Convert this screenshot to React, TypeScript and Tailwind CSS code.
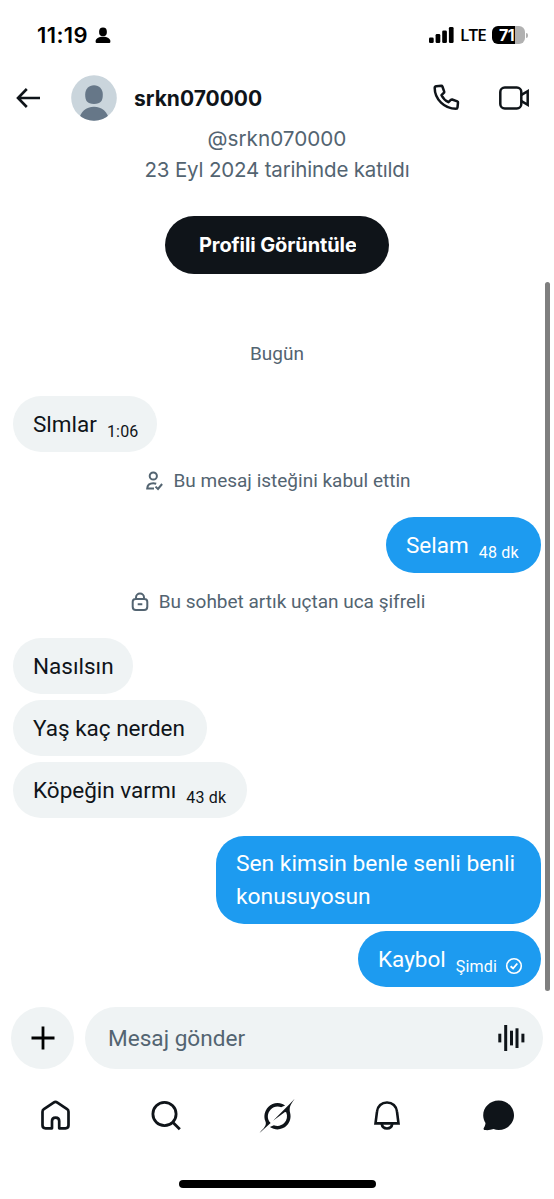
import type { ReactNode } from "react";

const INK = "#0f1419";

function StatusBar() {
  return (
    <div className="flex h-[72px] shrink-0 items-start justify-between pl-[37px] pr-[26px] pt-[23px] text-black">
      <div className="flex h-6 items-center">
        <span className="w-[51px] whitespace-nowrap font-[Inter,sans-serif] text-[22px] font-semibold leading-6 tracking-[0.4px]">11:19</span>
        <svg className="ml-[7px]" width="16" height="17" viewBox="0 0 16 17" fill="currentColor">
          <ellipse cx="8" cy="4.9" rx="3.9" ry="4.3" />
          <path d="M.6 14.4C.6 11.6 3.7 9.8 8 9.8s7.400 1.800 7.400 4.600c0 1-.6 1.600-1.700 1.600H2.300C1.200 16 .6 15.400.6 14.400z" />
        </svg>
      </div>
      <div className="flex h-6 items-center">
        <svg width="25" height="18" viewBox="0 0 25 18" fill="currentColor">
          <rect x="0" y="11.500" width="4.700" height="5.500" rx="1.300" />
          <rect x="6.600" y="8" width="4.700" height="9" rx="1.300" />
          <rect x="13.200" y="4.500" width="4.700" height="12.500" rx="1.300" />
          <rect x="19.900" y="1" width="4.700" height="16" rx="1.300" />
        </svg>
        <span className="ml-[6px] w-[27px] whitespace-nowrap font-['Open_Sans',sans-serif] text-[17px] font-semibold leading-6 tracking-[-0.8px]">LTE</span>
        <div className="ml-[5px] flex h-[18px] w-[33px] items-center overflow-hidden rounded-[6px] bg-[linear-gradient(to_right,#000_70%,#b1b1b1_70%)] pl-[7px]">
          <span className="whitespace-nowrap font-[Inter,sans-serif] text-[16px] font-bold leading-[18px] tracking-[-0.5px] text-white">71</span>
        </div>
        <div className="ml-[1px] h-[5px] w-[2px] rounded-r-full bg-[#b1b1b1]" />
      </div>
    </div>
  );
}

function Header() {
  return (
    <header className="flex h-[52px] shrink-0 items-center pl-[16px] pr-[23px] text-[#0f1419]">
      <svg width="25" height="20" viewBox="0 0 25 20" fill="none" stroke={INK} strokeWidth="2.600">
        <path d="M24 10H2.500M10.800 1L2 10l8.800 9" />
      </svg>
      <svg className="ml-[30px]" width="46" height="46" viewBox="0 0 46 46">
        <defs>
          <clipPath id="avatar"><circle cx="23" cy="23" r="22.800" /></clipPath>
        </defs>
        <g clipPath="url(#avatar)">
          <rect width="46" height="46" fill="#cad5dc" />
          <path d="M23 10.300c5.200 0 8.800 3.900 8.800 9.200 0 6-1.800 9.500-8.800 9.500s-8.800-3.500-8.800-9.500c0-5.300 3.600-9.200 8.800-9.200z" fill="#667788" />
          <path d="M7.500 46C9.500 36.500 15 31.800 23 31.800S36.500 36.500 38.500 46z" fill="#667788" />
        </g>
      </svg>
      <h1 className="ml-[17px] flex-1 whitespace-nowrap pt-[2px] font-[Inter,sans-serif] text-[21px] font-bold leading-7">srkn070000</h1>
      <svg width="28" height="28" viewBox="0 0 28 28" fill="none" stroke={INK} strokeWidth="2.500" strokeLinejoin="round">
        <path d="M3.300 2.200l5-.400c.6 0 .9.200 1.100.700l1.800 5.200c.1.400 0 .7-.2 1L8.500 11.200c1.500 3 4 5.500 7 7l2.600-2.500c.3-.2.600-.3 1-.2l5.200 1.900c.5.200.8.600.700 1.100l-.5 4.800c-.1.900-.7 1.500-1.600 1.500C11.600 24.800 1.700 15.300 1.700 4c0-1 .6-1.700 1.600-1.800z" />
      </svg>
      <svg className="ml-[38px]" width="32" height="26" viewBox="0 0 32 26" fill="none" stroke={INK} strokeWidth="2.500">
        <rect x="1.300" y="2.500" width="21" height="21" rx="4.500" />
        <path d="M22.500 9.800l6.200-3.600v13.600l-6.200-3.600" />
      </svg>
    </header>
  );
}

function Notice({ icon, children }: { icon: ReactNode; children: ReactNode }) {
  return (
    <div className="flex h-6 items-center justify-center gap-[10px] pl-[2px] text-[19px] leading-6 text-[#536471]">
      {icon}
      <span className="whitespace-nowrap">{children}</span>
    </div>
  );
}

function Bubble({ text, time, mine, width, sent }: { text: string; time?: string; mine?: boolean; width: string; sent?: boolean }) {
  const tone = mine ? "self-end bg-[#1d9bf0] text-white" : "self-start bg-[#eff3f4] text-[#0f1419]";
  return (
    <div className={`flex h-[56px] shrink-0 items-center rounded-[28px] pl-5 ${tone} ${width}`}>
      <span className="whitespace-nowrap text-[22.500px] leading-8">{text}</span>
      {time && <span className="ml-[10px] whitespace-nowrap pt-[16px] text-[16px] leading-5 tracking-[0.200px]">{time}</span>}
      {sent && (
        <svg className="ml-[8px] mt-[14px]" width="18" height="18" viewBox="0 0 18 18" fill="none" stroke="currentColor" strokeWidth="1.600">
          <circle cx="9" cy="9" r="7.300" />
          <path d="M5.600 9.200l2.500 2.300 4.200-5" strokeWidth="1.900" />
        </svg>
      )}
    </div>
  );
}

function Composer() {
  return (
    <div className="flex h-[62px] shrink-0 gap-[11px] pl-[11px] pr-[11px]">
      <button className="flex w-[63px] items-center justify-center rounded-full bg-[#eff3f4]">
        <svg width="24" height="24" viewBox="0 0 24 24" stroke="#000" strokeWidth="2.800">
          <path d="M12 .500v23M.500 12h23" />
        </svg>
      </button>
      <div className="flex flex-1 items-center justify-between rounded-full bg-[#eff3f4] pl-[23px] pr-[18px]">
        <span className="whitespace-nowrap pt-[2px] text-[22.600px] leading-8 text-[#536471]">Mesaj gönder</span>
        <svg width="27" height="26" viewBox="0 0 27 26" fill={INK}>
          <rect x="0.300" y="8.700" width="3" height="8.700" />
          <rect x="6.200" y="0" width="3" height="26" />
          <rect x="12" y="5.700" width="3" height="14.700" />
          <rect x="17.500" y="3.300" width="3" height="19.700" />
          <rect x="23.400" y="8.700" width="3" height="8.700" />
        </svg>
      </div>
    </div>
  );
}

function BottomNav() {
  return (
    <nav className="flex h-[36px] shrink-0 items-center justify-between pl-[37px] pr-[38px]">
      <svg width="36" height="36" viewBox="0 0 36 36" fill="none" stroke={INK} strokeWidth="2.700" strokeLinejoin="round">
        <path d="M15 30.300H8.500c-1.800 0-3-1.200-3-3V13.700c0-1.100.500-1.900 1.400-2.500l9.700-6.600c1.200-.800 2.600-.800 3.800 0l9.700 6.600c.900.600 1.400 1.400 1.400 2.500v13.600c0 1.800-1.200 3-3 3h-6.300v-7.200c0-2-1.500-3.500-3.600-3.500S15 21.100 15 23.100z" />
      </svg>
      <svg width="36" height="36" viewBox="0 0 36 36" fill="none" stroke={INK} strokeWidth="2.800">
        <circle cx="16.500" cy="16" r="11.600" />
        <path d="M24.500 24l7.300 7.300" />
      </svg>
      <svg width="36" height="36" viewBox="-.5 -1 34 34" fill={INK}>
        <path d="M12.745 20.540l10.970-8.190c.539-.4 1.307-.244 1.564.38 1.349 3.288.746 7.241-1.938 9.955-2.683 2.714-6.417 3.310-9.830 1.954l-3.728 1.745c5.347 3.697 11.840 2.782 15.898-1.324 3.219-3.255 4.216-7.692 3.284-11.693l.008.009c-1.351-5.878.332-8.227 3.782-13.031L33 0l-4.540 4.590v-.014L12.743 20.544m-2.263 1.987c-3.837-3.707-3.175-9.446.1-12.755 2.420-2.449 6.388-3.448 9.852-1.979l3.720-1.737c-.670-.490-1.530-1.017-2.515-1.387-4.455-1.854-9.789-.931-13.410 2.728-3.483 3.523-4.579 8.940-2.697 13.561 1.405 3.454-.899 5.898-3.220 8.364C1.490 30.200.666 31.074 0 32l10.478-9.466" />
      </svg>
      <svg width="36" height="36" viewBox="0 0 36 36" fill="none" stroke={INK} strokeWidth="2.600">
        <path d="M6.500 25.400L8 13.700C8.500 8.300 12.600 4.500 18 4.500s9.500 3.800 10 9.200l1.500 11.700z" />
        <path d="M12.700 25.800c.4 2.900 2.500 4.700 5.300 4.700s4.900-1.800 5.300-4.700" />
      </svg>
      <svg width="36" height="36" viewBox="0 0 36 36" fill={INK}>
        <path d="M18.600 2.500C27.200 2.500 34 9.300 34 17.300S27.200 32 18.600 32c-1.900 0-3.400-.300-5-.900-2.600.900-5.500 1.300-8.600 1-1.300-.100-1.800-1.300-1.100-2.300.900-1.400 1.500-2.900 1.600-4.800-1.500-2.300-2.300-4.900-2.300-7.700 0-8 6.800-14.800 15.400-14.800z" />
      </svg>
    </nav>
  );
}

export default function App() {
  return (
    <div className="relative flex h-[1199px] w-[554px] flex-col overflow-hidden bg-white font-[Roboto,sans-serif]">
      <StatusBar />
      <Header />
      <main className="flex h-[883px] shrink-0 flex-col">
        <div className="flex shrink-0 flex-col items-center font-[Inter,sans-serif] leading-[31px] text-[#536471]">
          <p className="-mt-px whitespace-nowrap text-[20.700px]">@srkn070000</p>
          <p className="whitespace-nowrap text-[20.500px] tracking-[-0.170px]">23 Eyl 2024 tarihinde katıldı</p>
          <button className="mt-[31px] flex h-[58px] w-[224px] items-center rounded-full bg-[#0f1419] pl-[34px]">
            <span className="w-[157px] overflow-hidden whitespace-nowrap text-left text-[20px] font-bold leading-7 tracking-[-0.100px] text-white">Profili Görüntüle</span>
          </button>
        </div>
        <p className="mt-[68px] h-6 text-center text-[19px] leading-6 text-[#536471]">Bugün</p>
        <section className="flex flex-col px-[13px] pt-[30px]">
          <Bubble text="Slmlar" time="1:06" width="w-[144px]" />
          <div className="mt-[17px]">
            <Notice
              icon={
                <svg width="18" height="20" viewBox="0 0 18 20" fill="none" stroke="currentColor" strokeWidth="2">
                  <circle cx="8.300" cy="5" r="3.600" />
                  <path d="M9 17.500H2.200c.2-3.300 2.700-5.200 6.100-5.200 1.100 0 2 .200 2.900.500M10.500 15.600l2.500 2.400 4.100-5" />
                </svg>
              }
            >
              Bu mesaj isteğini kabul ettin
            </Notice>
          </div>
          <div className="mt-[24px] flex flex-col"><Bubble text="Selam" time="48 dk" mine width="w-[155px]" /></div>
          <div className="mt-[17px]">
            <Notice
              icon={
                <svg width="18" height="20" viewBox="0 0 18 20" fill="none" stroke="currentColor" strokeWidth="2">
                  <path d="M5 7V5.500C5 3.200 6.800 1.600 9 1.600s4 1.600 4 3.900V7M4.600 7h8.800c1.900 0 2.900 1 2.900 2.800v5c0 2-1.200 3.200-3.200 3.200H4.900c-2 0-3.200-1.200-3.200-3.200v-5C1.700 8 2.700 7 4.600 7zM6.700 12.200h4.600" />
                </svg>
              }
            >
              Bu sohbet artık uçtan uca şifreli
            </Notice>
          </div>
          <div className="mt-[24px] flex flex-col gap-[6px]">
            <Bubble text="Nasılsın" width="w-[120px]" />
            <Bubble text="Yaş kaç nerden" width="w-[194px]" />
            <Bubble text="Köpeğin varmı" time="43 dk" width="w-[234px]" />
          </div>
          <div className="mt-[18px] h-[88px] w-[325px] self-end rounded-[28px] bg-[#1d9bf0] pl-5 pt-[12px] text-[22.800px] leading-[32.500px] text-white">
            <p className="whitespace-nowrap">Sen kimsin benle senli benli</p>
            <p className="whitespace-nowrap">konusuyosun</p>
          </div>
          <div className="mt-[7px] flex flex-col"><Bubble text="Kaybol" time="Şimdi" mine sent width="w-[183px]" /></div>
        </section>
      </main>
      <Composer />
      <div className="h-[29px] shrink-0" />
      <BottomNav />
      <div className="mt-[46px] h-[8px] w-[197px] shrink-0 self-center rounded-full bg-black" />
      <div className="absolute left-[545px] top-[282px] h-[709px] w-[5px] rounded-full bg-[#7f7f7f]" />
    </div>
  );
}
